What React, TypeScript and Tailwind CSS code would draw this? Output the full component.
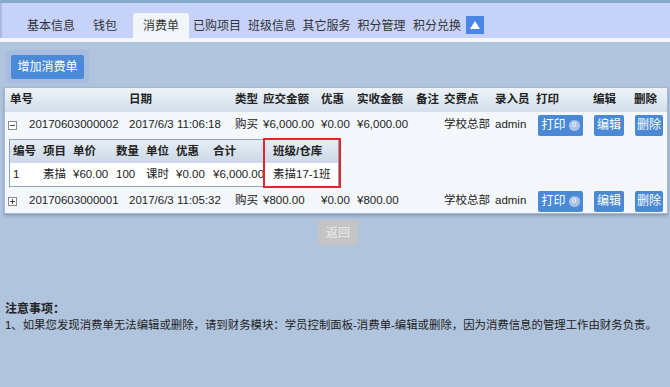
import React from 'react';

const tabs = [
  { label: '基本信息', cls: 'w-[66px]' },
  { label: '钱包', cls: 'w-[42px]' },
  { label: '消费单', cls: 'ml-[7px] w-[56px] h-[25px] bg-[#f1f6fb] rounded-t-[3px]', active: true },
  { label: '已购项目', cls: 'w-[56px]' },
  { label: '班级信息', cls: 'w-[54px]' },
  { label: '其它服务', cls: 'w-[55px]' },
  { label: '积分管理', cls: 'w-[55px]' },
  { label: '积分兑换', cls: 'w-[56px]' },
];

const mainCols = [
  { label: '单号', cls: 'w-[121px]' },
  { label: '日期', cls: 'w-[106px]' },
  { label: '类型', cls: 'w-[28px]' },
  { label: '应交金额', cls: 'w-[58px]' },
  { label: '优惠', cls: 'w-[36px]' },
  { label: '实收金额', cls: 'w-[59px]' },
  { label: '备注', cls: 'w-[28px]' },
  { label: '交费点', cls: 'w-[51px]' },
  { label: '录入员', cls: 'w-[41px]' },
  { label: '打印', cls: 'w-[57px]' },
  { label: '编辑', cls: 'w-[41px]' },
  { label: '删除', cls: '' },
];

const subCols = [
  { label: '编号', cls: 'w-[30px]', pad: 'pl-[3px]' },
  { label: '项目', cls: 'w-[30px]', pad: 'pl-[3px]' },
  { label: '单价', cls: 'w-[43px]', pad: 'pl-[3px]' },
  { label: '数量', cls: 'w-[30px]', pad: 'pl-[3px]' },
  { label: '单位', cls: 'w-[30px]', pad: 'pl-[3px]' },
  { label: '优惠', cls: 'w-[37px]', pad: 'pl-[3px]' },
  { label: '合计', cls: 'w-[54px]', pad: 'pl-[3px]' },
  { label: '班级/仓库', cls: '', pad: 'pl-[9px]' },
];

const orders = [
  {
    id: '20170603000002',
    date: '2017/6/3 11:06:18',
    due: '¥6,000.00',
    off: '¥0.00',
    paid: '¥6,000.00',
    open: true,
  },
  {
    id: '20170603000001',
    date: '2017/6/3 11:05:32',
    due: '¥800.00',
    off: '¥0.00',
    paid: '¥800.00',
    open: false,
  },
];

function ToggleIcon({ open }: { open: boolean }) {
  return (
    <svg width="9" height="9" viewBox="0 0 9 9" className="inline-block shrink-0">
      <rect x="0.5" y="0.5" width="8" height="8" fill="#fff" stroke="#8a8a8a" />
      <line x1="2" y1="4.5" x2="7" y2="4.5" stroke="#444" />
      {!open && <line x1="4.5" y1="2" x2="4.5" y2="7" stroke="#444" />}
    </svg>
  );
}

function BlueButton({ children, className = '' }: { children: React.ReactNode; className?: string }) {
  return (
    <span
      className={`inline-flex h-[21px] items-center justify-center rounded-[2px] bg-[#4a89d6] text-[12px] text-white ${className}`}
    >
      {children}
    </span>
  );
}

function OrderRow({ o }: { o: (typeof orders)[number] }) {
  return (
    <tr className={o.open ? 'h-[26px]' : 'h-[24px]'}>
      <td className="pl-[3px]">
        <span className="flex items-center gap-[12px]">
          <ToggleIcon open={o.open} />
          {o.id}
        </span>
      </td>
      <td className="pl-[3px]">{o.date}</td>
      <td className="pl-[3px]">购买</td>
      <td className="pl-[3px]">{o.due}</td>
      <td className="pl-[3px]">{o.off}</td>
      <td className="pl-[3px]">{o.paid}</td>
      <td className="pl-[3px]"></td>
      <td className="pl-[3px]">学校总部</td>
      <td className="pl-[3px]">admin</td>
      <td className="pl-[5px]">
        <BlueButton className="w-[45px] gap-[3px]">
          打印
          <span className="flex h-[11px] w-[11px] items-center justify-center rounded-full bg-[#a9c3e4] text-[8px] leading-none text-white">
            0
          </span>
        </BlueButton>
      </td>
      <td className="pl-[4px]">
        <BlueButton className="w-[30px]">编辑</BlueButton>
      </td>
      <td className="pl-[4px]">
        <BlueButton className="w-[28px]">删除</BlueButton>
      </td>
    </tr>
  );
}

export default function App() {
  return (
    <div className="min-h-[387px] w-[670px] bg-[#b0c4de] font-['Liberation_Sans','Noto_Sans_CJK_SC',sans-serif] text-[#222]">
      <div className="h-[3px] bg-[#86aac8]" />
      <div className="flex h-[35px] items-end border-l-[2px] border-[#aab8e2] bg-[#c6d2fa] pl-[16px]">
        {tabs.map((t) => (
          <div
            key={t.label}
            className={`flex h-[25px] items-center justify-center text-[12px] text-[#333] ${t.cls}`}
          >
            {t.label}
          </div>
        ))}
        <div className="mb-[4px] ml-[1px] flex h-[18px] w-[18px] items-center justify-center bg-[#4a86e6]">
          <svg width="10" height="8" viewBox="0 0 10 8">
            <polygon points="5,0 10,8 0,8" fill="#fff" />
          </svg>
        </div>
      </div>
      <div className="h-[4px] bg-[#f3f7fb]" />

      <div className="pl-[6px] pt-[8px]">
        <div className="inline-flex rounded-[4px] bg-[#a6bde0] p-[5px] pb-[4px]">
          <span className="flex h-[24px] w-[73px] items-center justify-center rounded-[2px] bg-[#4a8ad6] text-[12px] text-white">
            增加消费单
          </span>
        </div>
      </div>

      <div className="ml-[4px] mt-[4px] w-[664px] border border-[#a3b8ce] bg-[#f4f8fc] shadow-[0_2px_3px_rgba(60,80,110,0.35)]">
        <table className="w-full table-fixed border-collapse text-[11.5px]">
          <colgroup>
            {mainCols.map((c) => (
              <col key={c.label} className={c.cls} />
            ))}
          </colgroup>
          <thead>
            <tr className="h-[24px]">
              {mainCols.map((c, i) => (
                <th
                  key={c.label}
                  className={`bg-linear-to-b from-[#eef3f8] to-[#d3dfeb] text-left font-bold ${
                    i === 0 ? 'pl-[5px]' : 'pl-[3px]'
                  }`}
                >
                  {c.label}
                </th>
              ))}
            </tr>
          </thead>
          <tbody>
            <OrderRow o={orders[0]} />
            <tr>
              <td colSpan={12} className="pb-[2px] pl-[4px] pt-[1px]">
                <div className="relative w-[330px] border border-[#8aa4be] bg-white">
                  <table className="w-full table-fixed border-collapse text-[11.5px]">
                    <colgroup>
                      {subCols.map((c) => (
                        <col key={c.label} className={c.cls} />
                      ))}
                    </colgroup>
                    <thead>
                      <tr className="h-[23px]">
                        {subCols.map((c) => (
                          <th
                            key={c.label}
                            className={`bg-linear-to-b from-[#e7eef6] to-[#cbd8e6] text-left font-bold ${c.pad}`}
                          >
                            {c.label}
                          </th>
                        ))}
                      </tr>
                    </thead>
                    <tbody>
                      <tr className="h-[23px]">
                        <td className="pl-[3px]">1</td>
                        <td className="pl-[3px]">素描</td>
                        <td className="pl-[3px]">¥60.00</td>
                        <td className="pl-[3px]">100</td>
                        <td className="pl-[3px]">课时</td>
                        <td className="pl-[3px]">¥0.00</td>
                        <td className="whitespace-nowrap pl-[3px]">¥6,000.00</td>
                        <td className="pl-[9px]">素描17-1班</td>
                      </tr>
                    </tbody>
                  </table>
                  <div className="absolute left-[253px] top-[-2px] h-[50px] w-[78px] border-2 border-[#e3262d]" />
                </div>
              </td>
            </tr>
            <OrderRow o={orders[1]} />
          </tbody>
        </table>
      </div>

      <div className="flex justify-center pl-[6px] pt-[6px]">
        <span className="flex h-[25px] w-[40px] items-center justify-center rounded-[2px] bg-[#c4c4c4] text-[12px] text-[#ececec]">
          返回
        </span>
      </div>

      <div className="pl-[5px] pt-[56px] leading-[16px]">
        <div className="text-[12px] font-bold">注意事项：</div>
        <div className="whitespace-nowrap text-[11.4px]">
          1、如果您发现消费单无法编辑或删除，请到财务模块：学员控制面板-消费单-编辑或删除，因为消费信息的管理工作由财务负责。
        </div>
      </div>
    </div>
  );
}
